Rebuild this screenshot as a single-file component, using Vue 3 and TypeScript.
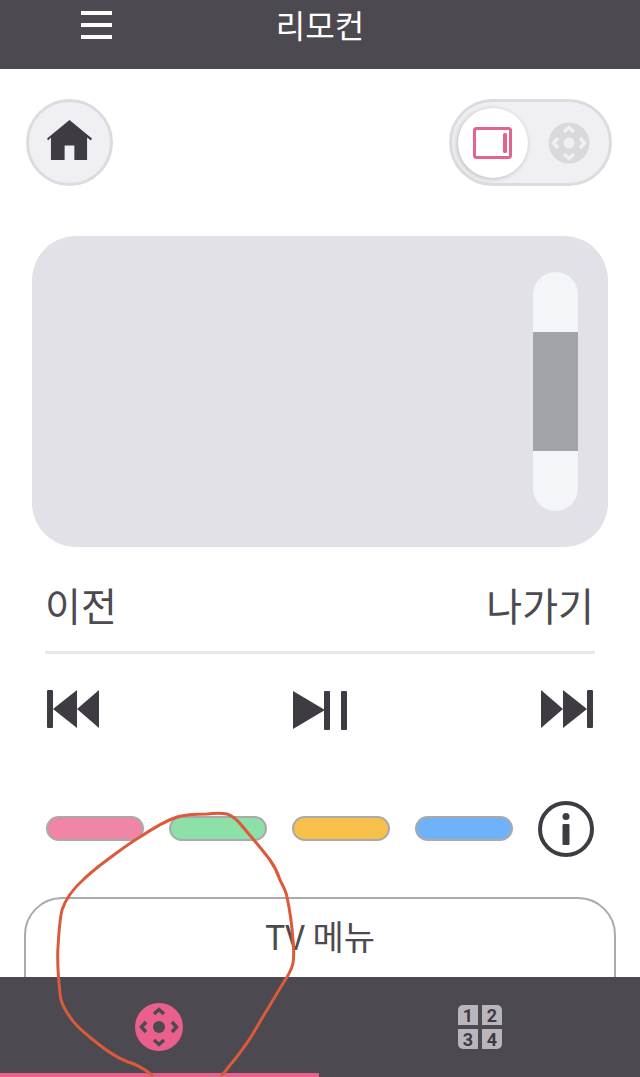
<script setup lang="ts">
const colorKeys: string[] = ['#f085a5', '#8ce0a8', '#f7c04a', '#6eb2fa']
</script>

<template>
  <div class="screen">
    <header class="top-bar">
      <button class="menu-btn" aria-label="메뉴">
        <span></span>
        <span></span>
        <span></span>
      </button>
      <h1 class="title">리모컨</h1>
    </header>

    <main class="content">
      <div class="mode-row">
        <button class="home-btn" aria-label="홈">
          <svg class="home-icon" width="47" height="41" viewBox="0 0 48 42">
            <path d="M24 0 L47 19 L46 21 L42 18 L42 41 L29 41 L29 26 L19 26 L19 41 L5 41 L5 18 L2 21 L1 19 Z" fill="#3e3c42" />
          </svg>
        </button>
        <div class="mode-toggle">
          <div class="mode-knob">
            <svg width="40" height="32" viewBox="0 0 40 32">
              <rect x="1.5" y="1.5" width="36" height="29" rx="2" fill="none" stroke="#e5648c" stroke-width="3" />
              <rect x="30" y="6" width="4" height="20" rx="1.5" fill="#e5648c" />
            </svg>
          </div>
          <svg class="mode-dpad" width="42" height="42" viewBox="0 0 42 42">
            <circle cx="21" cy="21" r="20.5" fill="#d9d9dd" />
            <circle cx="21" cy="21" r="5.5" fill="#f0f0f4" />
            <path d="M16 10 L21 5.5 L26 10 M16 32 L21 36.5 L26 32 M10 16 L5.5 21 L10 26 M32 16 L36.5 21 L32 26" fill="none" stroke="#f0f0f4" stroke-width="3.5" />
          </svg>
        </div>
      </div>

      <div class="touch-pad">
        <div class="scroll-track">
          <div class="scroll-thumb"></div>
        </div>
      </div>

      <div class="nav-row">
        <span>이전</span>
        <span>나가기</span>
      </div>

      <div class="media-row">
        <svg width="52" height="38" viewBox="0 0 52 38">
          <rect x="0" y="0" width="6" height="38" rx="1" fill="#3e3c42" />
          <path d="M6 19 L30 0 L30 38 Z M30 19 L52 0 L52 38 Z" fill="#3e3c42" />
        </svg>
        <svg width="54" height="40" viewBox="0 0 54 40">
          <path d="M0 1 L32 20 L0 39 Z" fill="#3e3c42" />
          <rect x="31" y="1" width="6" height="39" rx="1" fill="#3e3c42" />
          <rect x="48" y="1" width="6" height="39" rx="1" fill="#3e3c42" />
        </svg>
        <svg width="52" height="38" viewBox="0 0 52 38">
          <path d="M0 0 L22 19 L0 38 Z M22 0 L46 19 L22 38 Z" fill="#3e3c42" />
          <rect x="46" y="0" width="6" height="38" rx="1" fill="#3e3c42" />
        </svg>
      </div>

      <div class="color-row">
        <button
          v-for="color in colorKeys"
          :key="color"
          class="color-key"
          :style="{ backgroundColor: color }"
        ></button>
        <svg width="56" height="56" viewBox="0 0 56 56">
          <circle cx="28" cy="28" r="26" fill="none" stroke="#3e3c42" stroke-width="4" />
          <circle cx="28" cy="15.5" r="3.5" fill="#3e3c42" />
          <rect x="24.5" y="23" width="7" height="21" rx="1" fill="#3e3c42" />
        </svg>
      </div>

      <div class="menu-card">TV 메뉴</div>
    </main>

    <footer class="tab-bar">
      <button class="tab tab-active" aria-label="방향키">
        <svg class="tab-dpad" width="48" height="48" viewBox="0 0 48 48">
          <circle cx="24" cy="24" r="24" fill="#ea5f8c" />
          <circle cx="24" cy="24" r="6" fill="#4c4a50" />
          <path d="M19 11 L24 6.5 L29 11 M19 37 L24 41.5 L29 37 M11 19 L6.5 24 L11 29 M37 19 L41.5 24 L37 29" fill="none" stroke="#4c4a50" stroke-width="3.5" />
        </svg>
      </button>
      <button class="tab" aria-label="숫자 키">
        <span class="num-grid">
          <span class="num-cell">1</span>
          <span class="num-cell">2</span>
          <span class="num-cell">3</span>
          <span class="num-cell">4</span>
        </span>
      </button>
    </footer>

    <!-- hand drawn marker on top of the screenshot -->
    <svg class="scribble" width="640" height="1077" viewBox="0 0 640 1077">
      <path
        d="M152 1075 C143 1068 136 1064 128 1062 C115 1057 107 1051 97 1043 C86 1034 76 1027 70 1017 C62 1006 60 1000 60 993 C58 975 57 962 58 947 C59 930 60 918 62 910 C66 898 74 888 83 880 C90 873 99 866 107 860 C118 852 128 844 140 837 C152 829 165 821 177 817 C187 814 197 814 207 814 C215 813 222 813 227 814 C234 816 239 822 243 827 C252 838 262 849 270 860 C275 867 278 874 280 880 C283 886 286 891 287 897 C290 911 292 926 293 940 C294 949 294 956 293 963 C292 968 290 972 287 977 C280 988 273 1000 267 1010 C260 1021 254 1033 247 1043 C241 1051 236 1059 230 1065 C227 1069 225 1072 222 1075"
        fill="none"
        stroke="#dc5a3c"
        stroke-width="3"
        stroke-linecap="round"
      />
    </svg>
  </div>
</template>

<style scoped>
.screen {
  position: relative;
  display: flex;
  flex-direction: column;
  width: 640px;
  height: 1077px;
  overflow: hidden;
  background: #fff;
  color: #4c4a50;
  font-family: "Noto Sans CJK KR", "Noto Sans", sans-serif;
}

button {
  padding: 0;
  border: none;
  background: none;
}

.top-bar {
  flex: none;
  position: relative;
  display: flex;
  justify-content: center;
  height: 69px;
  background: #4c4a50;
}

.menu-btn {
  position: absolute;
  top: 11px;
  left: 81px;
  display: flex;
  flex-direction: column;
  justify-content: space-between;
  width: 31px;
  height: 28px;
}

.menu-btn span {
  display: block;
  height: 4px;
  background: #fff;
}

.title {
  margin: 0;
  color: #fff;
  font-size: 32px;
  font-weight: 400;
  line-height: 48px;
}

.content {
  flex: 1;
  min-height: 0;
  overflow: hidden;
  display: flex;
  flex-direction: column;
}

.mode-row {
  flex: none;
  display: flex;
  justify-content: space-between;
  padding: 30px 28px 0 26px;
}

.home-btn {
  display: flex;
  align-items: center;
  justify-content: center;
  box-sizing: border-box;
  width: 87px;
  height: 87px;
  padding-bottom: 5px;
  border: 3px solid #dcdcdf;
  border-radius: 50%;
  background: #f0f0f4;
}

.mode-toggle {
  display: flex;
  align-items: center;
  box-sizing: border-box;
  width: 163px;
  height: 87px;
  padding-left: 6px;
  border: 3px solid #dcdcdf;
  border-radius: 44px;
  background: #f0f0f4;
}

.mode-knob {
  display: flex;
  align-items: center;
  justify-content: center;
  width: 70px;
  height: 70px;
  border-radius: 50%;
  background: #fff;
  box-shadow: -1px 1px 5px rgba(60, 60, 70, 0.3);
}

.mode-dpad {
  margin-left: 20px;
}

.touch-pad {
  flex: none;
  display: flex;
  justify-content: flex-end;
  align-items: center;
  box-sizing: border-box;
  width: 576px;
  height: 311px;
  margin: 50px 0 0 32px;
  padding-right: 30px;
  border-radius: 44px;
  background: #e1e1e7;
}

.scroll-track {
  display: flex;
  align-items: center;
  width: 45px;
  height: 239px;
  border-radius: 23px;
  background: #f4f5f8;
}

.scroll-thumb {
  width: 100%;
  height: 119px;
  background: #a3a3aa;
}

.nav-row {
  flex: none;
  display: flex;
  justify-content: space-between;
  align-items: center;
  box-sizing: border-box;
  width: 550px;
  height: 107px;
  margin-left: 45px;
  padding: 9px 1px 0 0;
  border-bottom: 3px solid #e8e8ea;
  font-size: 39px;
}

.media-row {
  flex: none;
  display: flex;
  justify-content: space-between;
  align-items: flex-start;
  width: 546px;
  margin: 36px 0 0 47px;
}

.color-row {
  flex: none;
  display: flex;
  align-items: center;
  gap: 25px;
  margin: 71px 0 0 46px;
}

.color-key {
  box-sizing: border-box;
  width: 98px;
  height: 25px;
  margin-top: -1px;
  border: 2px solid #aaa;
  border-radius: 13px;
}

.menu-card {
  flex: none;
  box-sizing: border-box;
  width: 592px;
  height: 120px;
  margin: 40px 0 0 24px;
  padding-top: 13px;
  border: 2px solid #aaa;
  border-radius: 38px;
  font-size: 34px;
  line-height: 48px;
  text-align: center;
}

.tab-bar {
  flex: none;
  display: flex;
  height: 100px;
  background: #4c4a50;
}

.tab {
  flex: none;
  box-sizing: border-box;
  display: flex;
  align-items: center;
  justify-content: center;
  width: 321px;
  height: 100px;
  padding-top: 4px;
  border-bottom: 4px solid transparent;
}

.tab-active {
  width: 319px;
  border-bottom-color: #ea5f8c;
}

.tab-dpad {
  margin-right: 1px;
}

.num-grid {
  display: grid;
  grid-template-columns: 20px 20px;
  grid-auto-rows: 20px;
  gap: 4px;
  margin-left: 1px;
  border-radius: 5px;
  overflow: hidden;
}

.num-cell {
  display: flex;
  align-items: center;
  justify-content: center;
  background: #b8b6bc;
  color: #3e3c42;
  font-family: Roboto, sans-serif;
  font-size: 18px;
  font-weight: 700;
}

.scribble {
  position: absolute;
  top: 0;
  left: 0;
  pointer-events: none;
}
</style>
